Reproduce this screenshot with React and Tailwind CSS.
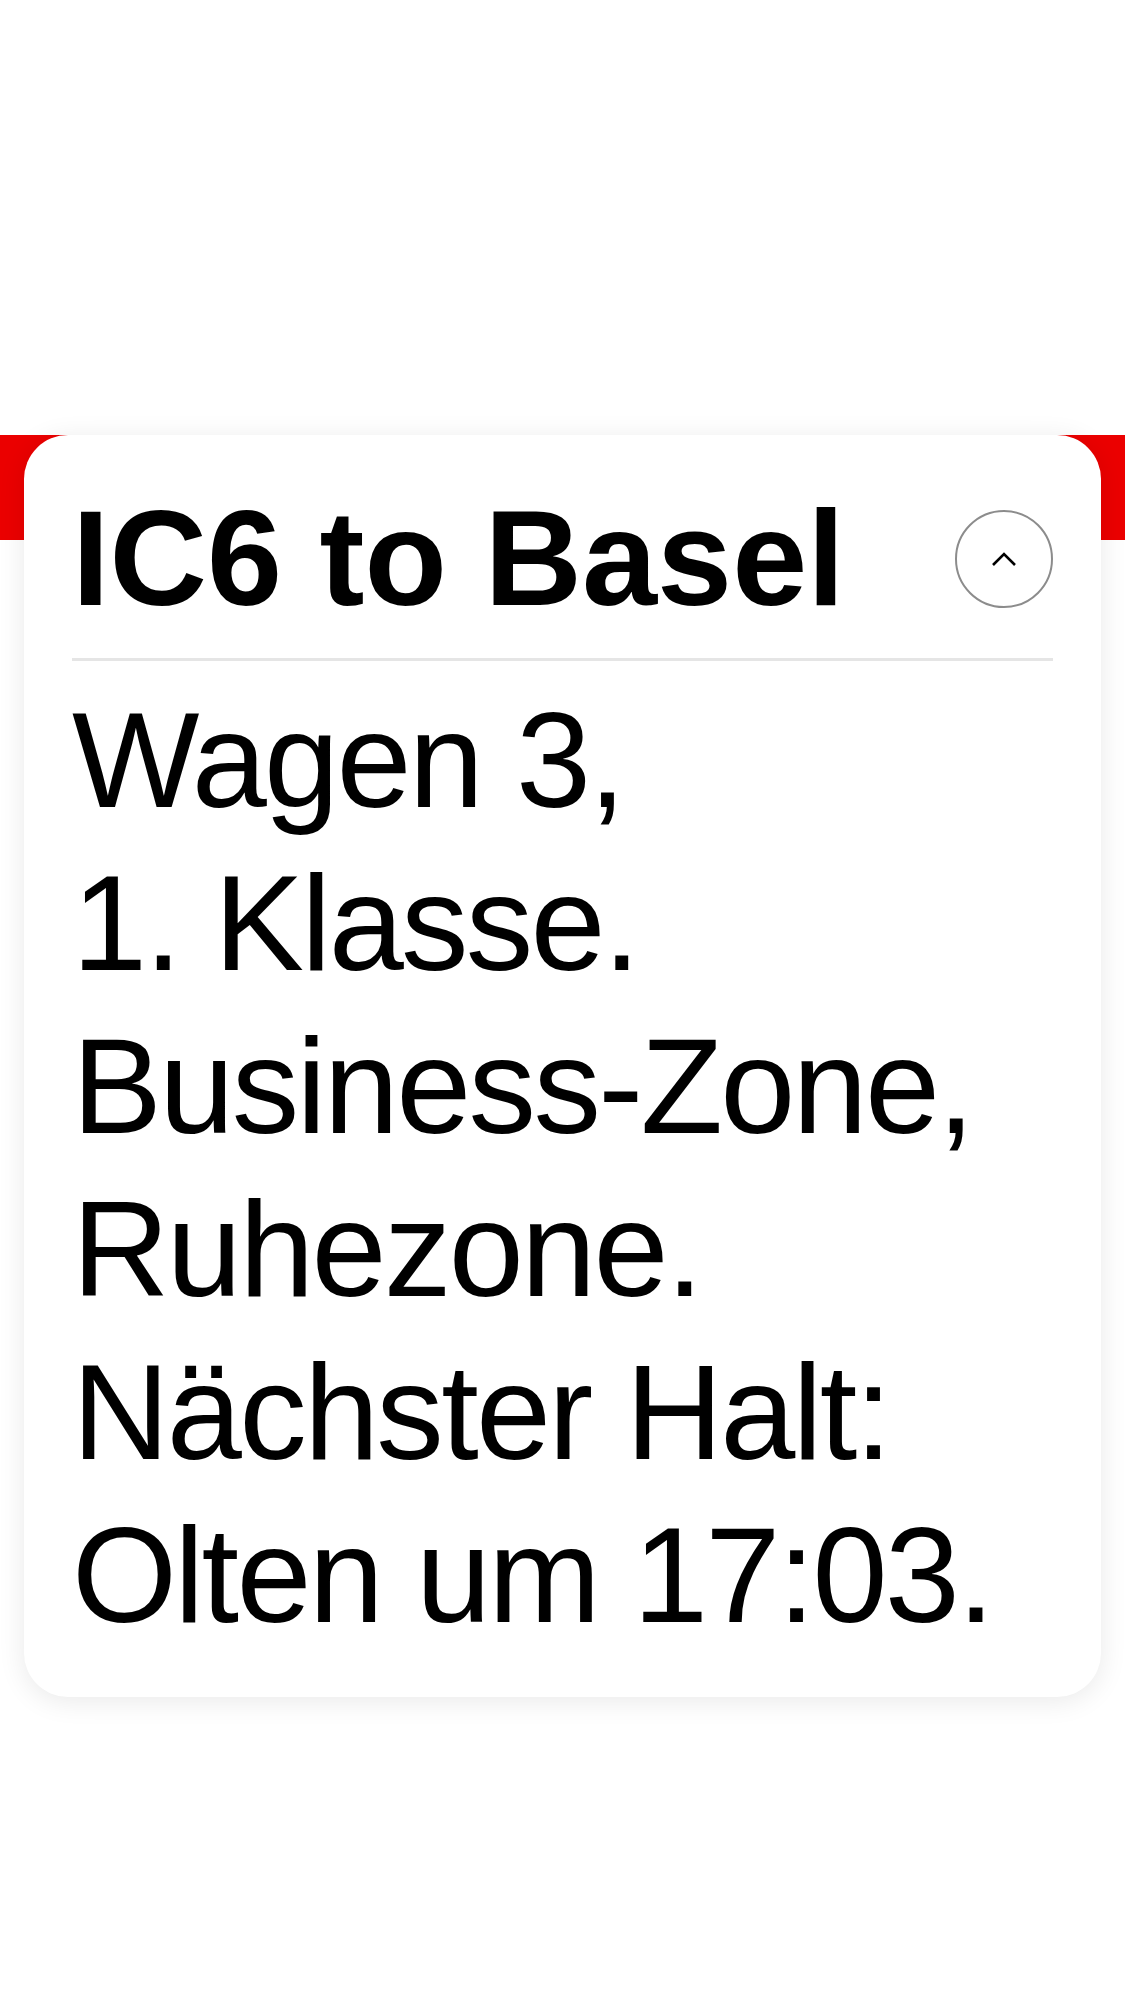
export default function App() {
  const lines = [
    "Wagen 3,",
    "1. Klasse.",
    "Business-Zone,",
    "Ruhezone.",
    "Nächster Halt:",
    "Olten um 17:03.",
  ];
  return (
    <div
      className="w-[1125px] h-[2001px] bg-white overflow-hidden pt-[435px]"
      style={{ fontFamily: '"Liberation Sans", Arial, sans-serif' }}
    >
      <div className="relative">
        <div className="absolute left-0 right-0 top-0 h-[105px] bg-[#eb0000]" />
        <div className="relative mx-[24px] bg-white rounded-[44px] shadow-[0_4px_28px_rgba(0,0,0,0.09)] px-[48px] pt-[42px] pb-[40px]">
          <div className="flex items-center justify-between h-[163px]">
            <h1 className="text-[135px] leading-[163px] font-bold text-black">
              IC6 to Basel
            </h1>
            <button className="w-[98px] h-[98px] rounded-full border-2 border-[#8c8c8c] flex items-center justify-center bg-white">
              <svg width="26" height="16" viewBox="0 0 26 16" fill="none">
                <polyline
                  points="2,14 13,3 24,14"
                  stroke="#000"
                  strokeWidth="2.6"
                  fill="none"
                />
              </svg>
            </button>
          </div>
          <div className="mt-[18px] h-[3px] bg-[#e5e5e5]" />
          <div className="mt-[18px] text-[135px] leading-[163px] text-black tracking-[-0.02em]">
            {lines.map((l) => (
              <div key={l}>{l}</div>
            ))}
          </div>
        </div>
      </div>
    </div>
  );
}
